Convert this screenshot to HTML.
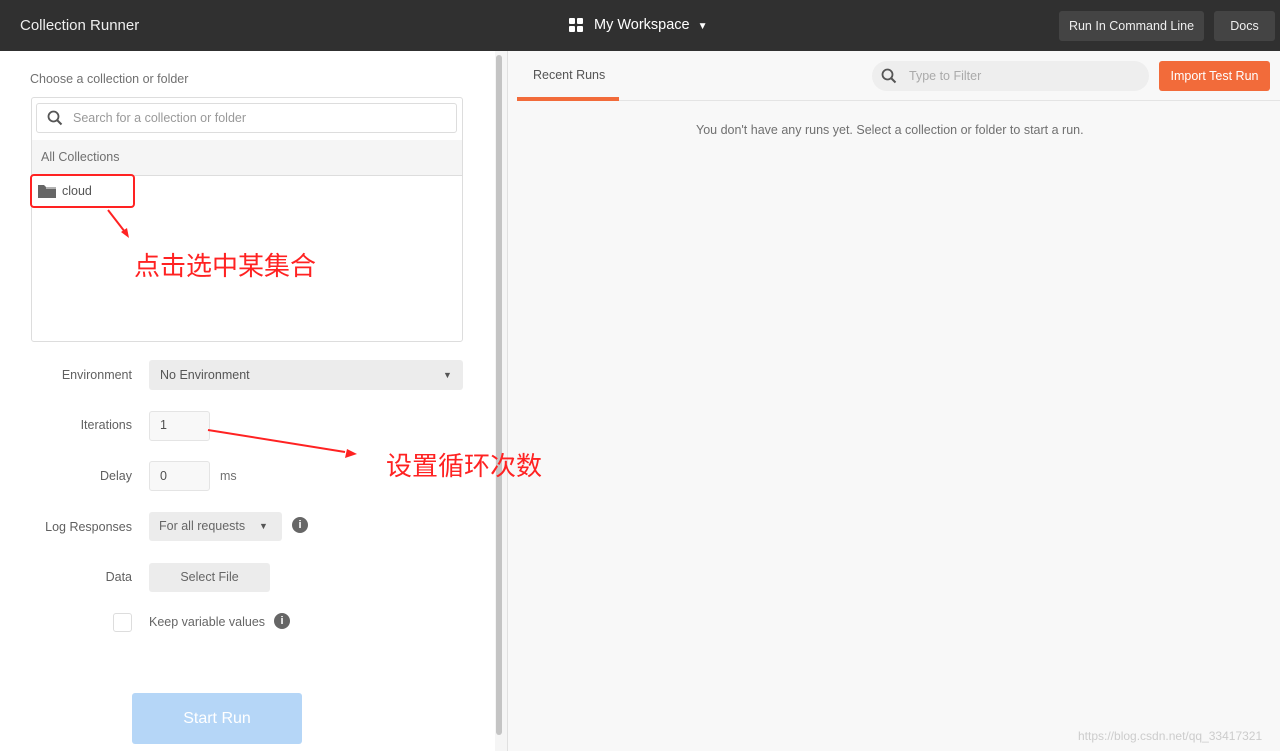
<!DOCTYPE html>
<html><head><meta charset="utf-8"><style>
*{box-sizing:border-box;margin:0;padding:0}
body{width:1280px;height:751px;overflow:hidden;font-family:"Liberation Sans",sans-serif;font-size:12.5px;color:#505050;background:#fff;position:relative}
.a{position:absolute}
.hdr{left:0;top:0;width:1280px;height:51px;background:#303030}
.btn{background:#444;color:#eee;border-radius:3px;font-size:12.5px;text-align:center;line-height:30px}
.lbl{color:#606060;text-align:right;width:92px;left:40px}
.gray{background:#ececec;border-radius:3px}
.cn{font-family:"Noto Sans CJK SC","WenQuanYi Zen Hei",sans-serif;color:#f22;font-size:26px;line-height:36px;z-index:5}
</style></head><body>
<div class="a hdr"></div>
<div class="a" style="left:20px;top:17px;color:#eee;font-size:15px">Collection Runner</div>
<div class="a" style="left:569px;top:18px;width:14px;height:14px">
<div class="a" style="left:0;top:0;width:6px;height:6px;background:#fff;border-radius:1px"></div><div class="a" style="left:8px;top:0;width:6px;height:6px;background:#fff;border-radius:1px"></div><div class="a" style="left:0;top:8px;width:6px;height:6px;background:#fff;border-radius:1px"></div><div class="a" style="left:8px;top:8px;width:6px;height:6px;background:#fff;border-radius:1px"></div></div>
<div class="a" style="left:594px;top:17px;color:#fff;font-size:14.5px">My Workspace <span style="font-size:10px;margin-left:4px">▼</span></div>
<div class="a btn" style="left:1059px;top:11px;width:145px">Run In Command Line</div>
<div class="a btn" style="left:1214px;top:11px;width:61px">Docs</div>

<div class="a" style="left:30px;top:72px;color:#707070">Choose a collection or folder</div>
<div class="a" style="left:31px;top:97px;width:432px;height:245px;border:1px solid #ddd;border-radius:3px"></div>
<div class="a" style="left:36px;top:103px;width:421px;height:30px;border:1px solid #ddd;border-radius:3px;background:#fff"></div>
<svg class="a" style="left:47px;top:110px" width="16" height="16" viewBox="0 0 16 16"><circle cx="6.5" cy="6.5" r="5" fill="none" stroke="#555" stroke-width="1.8"/><path d="M10 10l4.5 4.5" stroke="#555" stroke-width="2"/></svg>
<div class="a" style="left:73px;top:111px;color:#999">Search for a collection or folder</div>
<div class="a" style="left:32px;top:140px;width:430px;height:36px;background:#f5f5f5;border-bottom:1px solid #ddd"></div>
<div class="a" style="left:41px;top:150px;color:#707070">All Collections</div>
<div class="a" style="left:30px;top:174px;width:105px;height:34px;border:2px solid #f22;border-radius:4px"></div>
<svg class="a" style="left:38px;top:184px" width="18" height="14" viewBox="0 0 18 14"><path d="M0 1h6l2 2h10v11H0z" fill="#666"/><path d="M8 4h10" stroke="#fff"/></svg>
<div class="a" style="left:62px;top:184px;color:#555">cloud</div>

<div class="a lbl" style="top:368px">Environment</div>
<div class="a gray" style="left:149px;top:360px;width:314px;height:30px"></div>
<div class="a" style="left:160px;top:368px;color:#555">No Environment</div>
<div class="a" style="left:443px;top:370px;font-size:9px;color:#555">▼</div>
<div class="a lbl" style="top:418px">Iterations</div>
<div class="a" style="left:149px;top:411px;width:61px;height:30px;border:1px solid #e4e4e4;border-radius:3px;background:#f8f8f8"></div>
<div class="a" style="left:160px;top:418px">1</div>
<div class="a lbl" style="top:469px">Delay</div>
<div class="a" style="left:149px;top:461px;width:61px;height:30px;border:1px solid #e4e4e4;border-radius:3px;background:#f8f8f8"></div>
<div class="a" style="left:160px;top:469px">0</div>
<div class="a" style="left:220px;top:469px;color:#707070">ms</div>
<div class="a lbl" style="top:520px">Log Responses</div>
<div class="a gray" style="left:149px;top:512px;width:133px;height:29px"></div>
<div class="a" style="left:159px;top:519px;color:#666">For all requests</div>
<div class="a" style="left:259px;top:521px;font-size:9px;color:#555">▼</div>
<div class="a" style="left:292px;top:517px;width:16px;height:16px;border-radius:50%;background:#666;color:#fff;font-size:11px;font-weight:bold;text-align:center;line-height:16px">i</div>
<div class="a lbl" style="top:570px">Data</div>
<div class="a gray" style="left:149px;top:563px;width:121px;height:29px;text-align:center;line-height:29px;color:#666">Select File</div>
<div class="a" style="left:113px;top:613px;width:19px;height:19px;border:1px solid #ddd;border-radius:3px"></div>
<div class="a" style="left:149px;top:615px;color:#666">Keep variable values</div>
<div class="a" style="left:274px;top:613px;width:16px;height:16px;border-radius:50%;background:#666;color:#fff;font-size:11px;font-weight:bold;text-align:center;line-height:16px">i</div>
<div class="a" style="left:132px;top:693px;width:170px;height:51px;background:#b5d6f7;border-radius:3px;color:#fff;font-size:16px;text-align:center;line-height:51px">Start Run</div>

<div class="a" style="left:495px;top:51px;width:12px;height:700px;background:#f5f5f5"></div>
<div class="a" style="left:496px;top:55px;width:6px;height:680px;background:#c4c4c4;border-radius:3px"></div>
<div class="a" style="left:507px;top:51px;width:773px;height:700px;background:#f8f8f8;border-left:1px solid #e0e0e0"></div>
<div class="a" style="left:517px;top:100px;width:763px;height:1px;background:#e4e4e4"></div>
<div class="a" style="left:533px;top:68px;color:#555">Recent Runs</div>
<div class="a" style="left:517px;top:97px;width:102px;height:4px;background:#f26b3a"></div>
<div class="a" style="left:872px;top:61px;width:277px;height:30px;border-radius:15px;background:#eee"></div>
<svg class="a" style="left:881px;top:68px" width="16" height="16" viewBox="0 0 16 16"><circle cx="6.5" cy="6.5" r="5" fill="none" stroke="#555" stroke-width="1.8"/><path d="M10 10l4.5 4.5" stroke="#555" stroke-width="2"/></svg>
<div class="a" style="left:909px;top:69px;color:#aaa">Type to Filter</div>
<div class="a" style="left:1159px;top:61px;width:111px;height:30px;background:#f26b3a;border-radius:3px;color:#fff;text-align:center;line-height:30px">Import Test Run</div>
<div class="a" style="left:696px;top:123px;color:#707070">You don't have any runs yet. Select a collection or folder to start a run.</div>
<div class="a" style="left:1078px;top:729px;color:#ccc;font-size:12px">https://blog.csdn.net/qq_33417321</div>

<svg class="a" style="left:0;top:0;z-index:5" width="560" height="480"><path d="M108 210L125 232" stroke="#f22" stroke-width="2"/><path d="M129 238l-8-6 6-4z" fill="#f22"/><path d="M208 430L345 452" stroke="#f22" stroke-width="2"/><path d="M357 454l-12 4 2-9z" fill="#f22"/></svg>
<div class="a cn" style="left:134px;top:247px">点击选中某集合</div>
<div class="a cn" style="left:386px;top:447px">设置循环次数</div>
</body></html>
